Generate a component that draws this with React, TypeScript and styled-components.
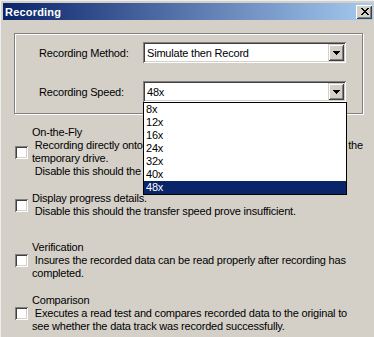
import styled, { createGlobalStyle } from "styled-components";

const GlobalStyle = createGlobalStyle`
  html, body {
    margin: 0;
    padding: 0;
    background: #d4d0c8;
  }
`;

const speeds = ["8x", "12x", "16x", "24x", "32x", "40x", "48x"];

const options = [
  {
    id: "fly",
    top: 12,
    lines: [
      "On-the-Fly",
      " Recording directly onto the disc without first writing an image file to the",
      "temporary drive.",
      " Disable this should the transfer speed prove insufficient.",
    ],
  },
  {
    id: "progress",
    top: 14,
    lines: [
      "Display progress details.",
      " Disable this should the transfer speed prove insufficient.",
    ],
  },
  {
    id: "verify",
    top: 23,
    lines: [
      "Verification",
      " Insures the recorded data can be read properly after recording has",
      "completed.",
    ],
  },
  {
    id: "compare",
    top: 14,
    lines: [
      "Comparison",
      " Executes a read test and compares recorded data to the original to",
      "see whether the data track was recorded successfully.",
    ],
  },
];

function CloseGlyph() {
  // 8x7 pixel cross, like the classic caption button
  const px = [
    [0, 0], [1, 0], [6, 0], [7, 0],
    [1, 1], [2, 1], [5, 1], [6, 1],
    [2, 2], [3, 2], [4, 2], [5, 2],
    [3, 3], [4, 3],
    [2, 4], [3, 4], [4, 4], [5, 4],
    [1, 5], [2, 5], [5, 5], [6, 5],
    [0, 6], [1, 6], [6, 6], [7, 6],
  ];
  return (
    <svg width="8" height="7" viewBox="0 0 8 7" shapeRendering="crispEdges">
      {px.map(([x, y]) => (
        <rect key={`${x}-${y}`} x={x} y={y} width="1" height="1" fill="#000" />
      ))}
    </svg>
  );
}

function ArrowGlyph() {
  return (
    <svg width="7" height="4" viewBox="0 0 7 4" shapeRendering="crispEdges">
      <rect x="0" y="0" width="7" height="1" fill="#000" />
      <rect x="1" y="1" width="5" height="1" fill="#000" />
      <rect x="2" y="2" width="3" height="1" fill="#000" />
      <rect x="3" y="3" width="1" height="1" fill="#000" />
    </svg>
  );
}

export default function App() {
  return (
    <>
      <GlobalStyle />
      <Window>
        <TitleBar>
          <TitleText>Recording</TitleText>
          <CloseButton>
            <CloseGlyph />
          </CloseButton>
        </TitleBar>

        <GroupBox>
          <FieldLabel>Recording Method:</FieldLabel>
          <Combo>
            <ComboText>Simulate then Record</ComboText>
            <ComboButton>
              <ArrowGlyph />
            </ComboButton>
          </Combo>

          <FieldLabel>Recording Speed:</FieldLabel>
          <Combo>
            <ComboText>48x</ComboText>
            <ComboButton>
              <ArrowGlyph />
            </ComboButton>
            <DropList>
              {speeds.map((s) => (
                <DropItem key={s} $selected={s === "48x"}>
                  {s}
                </DropItem>
              ))}
            </DropList>
          </Combo>
        </GroupBox>

        <Options>
          {options.map((opt) => (
            <OptionRow key={opt.id} $top={opt.top}>
              <CheckBox />
              <OptionText>{opt.lines.join("\n")}</OptionText>
            </OptionRow>
          ))}
        </Options>
      </Window>
    </>
  );
}

const Window = styled.div`
  width: 374px;
  height: 337px;
  box-sizing: border-box;
  overflow: hidden;
  background: #d4d0c8;
  border-top: 1px solid #eeeeee;
  border-left: 1px solid #eeeeee;
  font-family: "Liberation Sans", Arial, sans-serif;
  font-size: 11px;
  letter-spacing: -0.2px;
  color: #000;
`;

const TitleBar = styled.div`
  display: flex;
  align-items: center;
  justify-content: space-between;
  height: 17px;
  margin: 2px 1px 0 2px;
  padding: 0 1px 0 2px;
  background: linear-gradient(to right, #0a246a, #a6caf0);
`;

const TitleText = styled.span`
  color: #fff;
  font-weight: 700;
  font-size: 11px;
  letter-spacing: 0.2px;
`;

const CloseButton = styled.div`
  display: flex;
  align-items: center;
  justify-content: center;
  width: 16px;
  height: 14px;
  box-sizing: border-box;
  padding-left: 1px;
  background: #d4d0c8;
  box-shadow: inset 1px 1px 0 #ffffff, inset -1px -1px 0 #404040,
    inset 2px 2px 0 #d4d0c8, inset -2px -2px 0 #808080;
`;

const GroupBox = styled.div`
  display: grid;
  grid-template-columns: 104px 203px;
  grid-auto-rows: 21px;
  row-gap: 18px;
  align-items: center;
  width: 349px;
  box-sizing: border-box;
  margin: 13px 0 0 13px;
  padding: 8px 16px 11px 24px;
  border: 1px solid #808080;
  box-shadow: inset 1px 1px 0 #ffffff, 1px 1px 0 #ffffff;
`;

const FieldLabel = styled.span`
  white-space: nowrap;
`;

const Combo = styled.div`
  position: relative;
  display: flex;
  align-items: center;
  height: 21px;
  box-sizing: border-box;
  padding: 2px;
  background: #fff;
  box-shadow: inset 1px 1px 0 #808080, inset -1px -1px 0 #ffffff,
    inset 2px 2px 0 #404040, inset -2px -2px 0 #d4d0c8;
`;

const ComboText = styled.span`
  flex: 1;
  padding-left: 2px;
  white-space: nowrap;
`;

const ComboButton = styled.div`
  display: flex;
  align-items: center;
  justify-content: center;
  width: 16px;
  height: 17px;
  background: #d4d0c8;
  box-shadow: inset 1px 1px 0 #d4d0c8, inset -1px -1px 0 #404040,
    inset 2px 2px 0 #ffffff, inset -2px -2px 0 #808080;
`;

const DropList = styled.div`
  position: absolute;
  top: 100%;
  left: 0;
  width: 204px;
  box-sizing: border-box;
  z-index: 5;
  background: #fff;
  border: 1px solid #000;
`;

const DropItem = styled.div<{ $selected?: boolean }>`
  height: 13px;
  line-height: 13px;
  padding-left: 2px;
  background: ${(p) => (p.$selected ? "#0a246a" : "#fff")};
  color: ${(p) => (p.$selected ? "#fff" : "#000")};
`;

const Options = styled.div`
  display: flex;
  flex-direction: column;
  padding-left: 14px;
`;

const OptionRow = styled.div<{ $top: number }>`
  display: flex;
  align-items: center;
  gap: 4px;
  margin-top: ${(p) => p.$top}px;
`;

const CheckBox = styled.div`
  flex: none;
  width: 13px;
  height: 13px;
  box-sizing: border-box;
  background: #fff;
  box-shadow: inset 1px 1px 0 #808080, inset -1px -1px 0 #ffffff,
    inset 2px 2px 0 #404040, inset -2px -2px 0 #d4d0c8;
`;

const OptionText = styled.div`
  white-space: pre;
  line-height: 13px;
`;
